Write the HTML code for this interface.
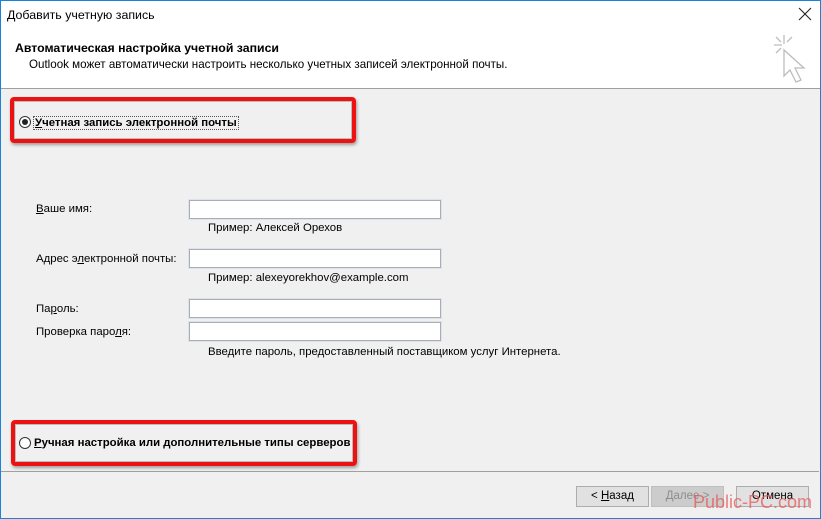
<!DOCTYPE html>
<html><head><meta charset="utf-8"><style>
*{margin:0;padding:0;box-sizing:border-box}
body{width:821px;height:519px;overflow:hidden;background:#f0f0f0;font-family:"Liberation Sans","Noto Sans CJK SC",sans-serif;font-size:11.4px;color:#000;position:relative}
.frame{position:absolute;inset:0;border:1px solid #1883d7;}
.hdr{position:absolute;left:1px;top:1px;right:1px;height:88px;background:#fff;border-bottom:1px solid #a0a0a0}
.a{position:absolute;white-space:nowrap}
.inp{position:absolute;left:189px;width:252px;height:19px;background:#fff;border:1px solid #abadb3;outline:1px solid #dde3ea}
.red{position:absolute;border:4px solid #ee1111;border-radius:4px;box-shadow:1px 2px 3px rgba(0,0,0,.35), inset 0 0 0 1px #bbb}
.rad{position:absolute;width:12px;height:12px;border:1px solid #333;border-radius:50%;background:#fff}
.btn{position:absolute;top:486px;width:73px;height:21px;background:#e1e1e1;border:1px solid #adadad;text-align:center;line-height:19px;font-size:11.5px}
u{text-decoration:underline}
</style></head><body>
<div class="hdr">
<div class="a" style="left:6px;top:7px;font-size:12.4px">Добавить учетную запись</div>
<svg class="a" style="left:797px;top:6px" width="14" height="14" viewBox="0 0 14 14"><path d="M1 1L13 13M13 1L1 13" stroke="#222" stroke-width="1.1"/></svg>
<div class="a" style="left:14px;top:40px;font-weight:bold;font-size:12.3px">Автоматическая настройка учетной записи</div>
<div class="a" style="left:28px;top:57px;font-size:11.6px">Outlook может автоматически настроить несколько учетных записей электронной почты.</div>
<svg class="a" style="left:0;top:0;overflow:visible" width="821" height="90">
<g stroke="#bdbdbd" stroke-width="1.3" fill="none" transform="translate(-1,-1)">
<path d="M784 35v9M784 50v0M774 45h8M776 37l5 5M792 37l-5 5M776 53l5-5"/>
<path d="M784 50L784 76L790 70L796 82L801 80L795 68L804 68Z" fill="#fff"/></g></svg>
</div>
<div class="red" style="left:10px;top:97px;width:346px;height:46px"></div>
<div class="rad" style="left:19px;top:116px"><div style="position:absolute;left:2px;top:2px;width:6px;height:6px;border-radius:50%;background:#222"></div></div>
<div class="a" style="left:33px;top:116px;font-weight:bold;border:1px dotted #555;padding:0 1px"><u>У</u>четная запись электронной почты</div>

<div class="a" style="left:36px;top:203px"><u>В</u>аше имя:</div>
<div class="inp" style="top:200px"></div>
<div class="a" style="left:208px;top:222px">Пример: Алексей Орехов</div>
<div class="a" style="left:36px;top:253px">Адрес э<u>л</u>ектронной почты:</div>
<div class="inp" style="top:249px"></div>
<div class="a" style="left:208px;top:272px">Пример: alexeyorekhov@example.com</div>
<div class="a" style="left:36px;top:303px">Па<u>р</u>оль:</div>
<div class="inp" style="top:299px"></div>
<div class="a" style="left:36px;top:326px">Проверка паро<u>л</u>я:</div>
<div class="inp" style="top:322px"></div>
<div class="a" style="left:208px;top:346px">Введите пароль, предоставленный поставщиком услуг Интернета.</div>

<div class="red" style="left:11px;top:420px;width:346px;height:46px"></div>
<div class="rad" style="left:19px;top:437px"></div>
<div class="a" style="left:34px;top:437px;font-weight:bold"><u>Р</u>учная настройка или дополнительные типы серверов</div>

<div class="a" style="left:1px;top:471px;width:818px;height:1px;background:#a0a0a0"></div>
<div class="btn" style="left:576px">&lt; <u>Н</u>азад</div>
<div class="btn" style="left:651px;background:#ccc;border-color:#bfbfbf;color:#8d8d8d"><u>Д</u>алее &gt;</div>
<div class="btn" style="left:736px">Отмена</div>
<div class="a" style="left:693px;top:492px;font-size:18px;color:rgba(230,90,90,.75)">Public-PC.com</div>
<div class="frame"></div>
</body></html>
